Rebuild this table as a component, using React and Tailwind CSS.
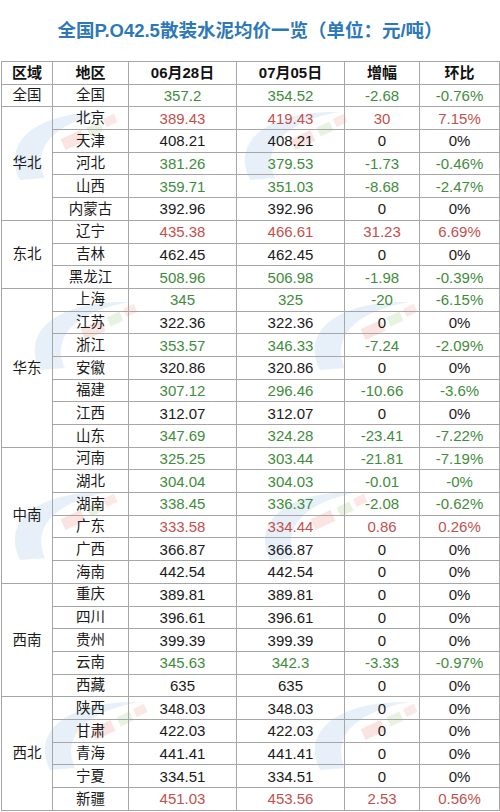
const GREEN = 'text-[#3f8c3c]'
const RED = 'text-[#c4504c]'
const BLACK = 'text-[#1a1a1a]'

const groups = [
  { name: '全国', rows: [['全国', '357.2', '354.52', '-2.68', '-0.76%', 'g']] },
  {
    name: '华北',
    rows: [
      ['北京', '389.43', '419.43', '30', '7.15%', 'r'],
      ['天津', '408.21', '408.21', '0', '0%', ''],
      ['河北', '381.26', '379.53', '-1.73', '-0.46%', 'g'],
      ['山西', '359.71', '351.03', '-8.68', '-2.47%', 'g'],
      ['内蒙古', '392.96', '392.96', '0', '0%', ''],
    ],
  },
  {
    name: '东北',
    rows: [
      ['辽宁', '435.38', '466.61', '31.23', '6.69%', 'r'],
      ['吉林', '462.45', '462.45', '0', '0%', ''],
      ['黑龙江', '508.96', '506.98', '-1.98', '-0.39%', 'g'],
    ],
  },
  {
    name: '华东',
    rows: [
      ['上海', '345', '325', '-20', '-6.15%', 'g'],
      ['江苏', '322.36', '322.36', '0', '0%', ''],
      ['浙江', '353.57', '346.33', '-7.24', '-2.09%', 'g'],
      ['安徽', '320.86', '320.86', '0', '0%', ''],
      ['福建', '307.12', '296.46', '-10.66', '-3.6%', 'g'],
      ['江西', '312.07', '312.07', '0', '0%', ''],
      ['山东', '347.69', '324.28', '-23.41', '-7.22%', 'g'],
    ],
  },
  {
    name: '中南',
    rows: [
      ['河南', '325.25', '303.44', '-21.81', '-7.19%', 'g'],
      ['湖北', '304.04', '304.03', '-0.01', '-0%', 'g'],
      ['湖南', '338.45', '336.37', '-2.08', '-0.62%', 'g'],
      ['广东', '333.58', '334.44', '0.86', '0.26%', 'r'],
      ['广西', '366.87', '366.87', '0', '0%', ''],
      ['海南', '442.54', '442.54', '0', '0%', ''],
    ],
  },
  {
    name: '西南',
    rows: [
      ['重庆', '389.81', '389.81', '0', '0%', ''],
      ['四川', '396.61', '396.61', '0', '0%', ''],
      ['贵州', '399.39', '399.39', '0', '0%', ''],
      ['云南', '345.63', '342.3', '-3.33', '-0.97%', 'g'],
      ['西藏', '635', '635', '0', '0%', ''],
    ],
  },
  {
    name: '西北',
    rows: [
      ['陕西', '348.03', '348.03', '0', '0%', ''],
      ['甘肃', '422.03', '422.03', '0', '0%', ''],
      ['青海', '441.41', '441.41', '0', '0%', ''],
      ['宁夏', '334.51', '334.51', '0', '0%', ''],
      ['新疆', '451.03', '453.56', '2.53', '0.56%', 'r'],
    ],
  },
]

const tone = (t) => (t === 'g' ? GREEN : t === 'r' ? RED : BLACK)

// faint site watermark (swoosh + coloured tiles)
function Watermark({ className }) {
  return (
    <svg className={className} width="150" height="90" viewBox="0 0 150 90">
      <path d="M20 80 C 0 40, 40 10, 110 12 C 60 20, 30 45, 45 78 Z" fill="#c9ddf2" opacity="0.45" />
      <rect x="62" y="34" width="22" height="12" fill="#f5c4be" opacity="0.45" transform="rotate(-25 73 40)" />
      <rect x="88" y="24" width="14" height="10" fill="#cfe5c4" opacity="0.5" transform="rotate(-25 95 29)" />
      <rect x="104" y="16" width="12" height="9" fill="#f6cdc8" opacity="0.45" transform="rotate(-25 110 20)" />
    </svg>
  )
}

export default function App() {
  const cell = 'border border-[#a6a6a6] text-center align-middle p-0 leading-none'
  return (
    <div className="relative w-[500px] h-[812px] bg-white overflow-hidden" style={{ fontFamily: '"Liberation Sans", Arial, "Noto Sans CJK SC", sans-serif' }}>
      <Watermark className="absolute left-[0px] top-[100px] pointer-events-none" />
      <Watermark className="absolute left-[230px] top-[100px] pointer-events-none" />
      <Watermark className="absolute left-[20px] top-[290px] pointer-events-none" />
      <Watermark className="absolute left-[300px] top-[290px] pointer-events-none" />
      <Watermark className="absolute left-[0px] top-[480px] pointer-events-none" />
      <Watermark className="absolute left-[250px] top-[480px] pointer-events-none" />
      <Watermark className="absolute left-[30px] top-[690px] pointer-events-none" />
      <Watermark className="absolute left-[300px] top-[690px] pointer-events-none" />
      <div className="relative h-[61px] flex items-center justify-center">
        <h1 className="text-[18.5px] font-bold text-[#2d78b8]">全国P.O42.5散装水泥均价一览（单位：元/吨）</h1>
      </div>
      <table className="relative ml-px w-[498px] border-collapse table-fixed border border-[#555]">
        <colgroup>
          <col className="w-[51px]" />
          <col className="w-[76px]" />
          <col className="w-[108px]" />
          <col className="w-[108px]" />
          <col className="w-[75px]" />
          <col className="w-[80px]" />
        </colgroup>
        <thead>
          <tr className="h-[22.7px] text-[15px] font-bold text-[#111]">
            <th className={cell + ' border-[#666]'}>区域</th>
            <th className={cell + ' border-[#666]'}>地区</th>
            <th className={cell + ' border-[#666]'}>06月28日</th>
            <th className={cell + ' border-[#666]'}>07月05日</th>
            <th className={cell + ' border-[#666]'}>增幅</th>
            <th className={cell + ' border-[#666]'}>环比</th>
          </tr>
        </thead>
        <tbody>
          {groups.map((g) =>
            g.rows.map((r, i) => (
              <tr key={g.name + r[0]} className={'h-[22.7px] ' + (i === 0 ? 'border-t border-t-[#555]' : '')}>
                {i === 0 && (
                  <td rowSpan={g.rows.length} className={cell + ' text-[14.5px] text-[#1a1a1a] border-[#666]'}>
                    {g.name}
                  </td>
                )}
                <td className={cell + ' text-[14.5px] text-[#1a1a1a]'}>{r[0]}</td>
                <td className={cell + ' text-[15px] ' + tone(r[5])}>{r[1]}</td>
                <td className={cell + ' text-[15px] ' + tone(r[5])}>{r[2]}</td>
                <td className={cell + ' text-[15px] ' + tone(r[5])}>{r[3]}</td>
                <td className={cell + ' text-[15px] ' + tone(r[5])}>{r[4]}</td>
              </tr>
            ))
          )}
        </tbody>
      </table>
    </div>
  )
}
